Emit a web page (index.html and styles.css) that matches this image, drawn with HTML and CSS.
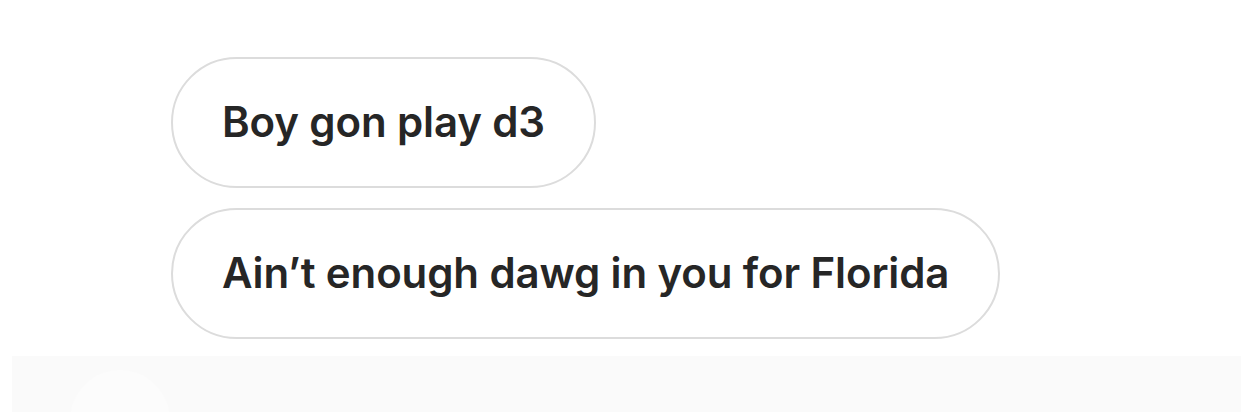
FILE: index.html
```html
<!DOCTYPE html>
<html lang="en">
  <head>
    <meta charset="UTF-8" />
    <meta name="viewport" content="width=device-width, initial-scale=1.0" />
    <title>Messages</title>
    <link rel="stylesheet" href="styles.css">
  </head>
  <body>
    <div class="thread">
      <div class="bubble">Boy gon play d3</div>
      <div class="bubble">Ain’t enough dawg in you for Florida</div>
    </div>

    <!-- composer bar -->
    <div class="composer">
      <div class="composer-edge"></div>
      <div class="composer-avatar"></div>
    </div>
  </body>
</html>
```

FILE: styles.css
```css
* {
  margin: 0;
  padding: 0;
  box-sizing: border-box;
}

html,
body {
  height: 413px;
  overflow: hidden;
}

body {
  font-family: Inter, "Liberation Sans", sans-serif;
  background: #ffffff;
  color: #262626;
}

.thread {
  display: flex;
  flex-direction: column;
  align-items: flex-start;
  gap: 20px;
  padding: 57px 0 0 171px;
}

.bubble {
  height: 131px;
  display: flex;
  align-items: center;
  padding: 0 49px 2px;
  border: 2px solid #dcdcdc;
  border-radius: 66px;
  font-size: 42px;
  font-weight: 600;
  letter-spacing: -0.12px;
  white-space: nowrap;
}

.composer {
  margin-top: 17px;
  height: 56px;
  background: #fafafa;
  display: flex;
  position: relative;
  overflow: hidden;
}

.composer-edge {
  width: 12px;
  background: #ffffff;
}

.composer-avatar {
  position: absolute;
  left: 70px;
  top: 14px;
  width: 100px;
  height: 100px;
  border-radius: 50%;
  background: #fcfcfc;
}
```
